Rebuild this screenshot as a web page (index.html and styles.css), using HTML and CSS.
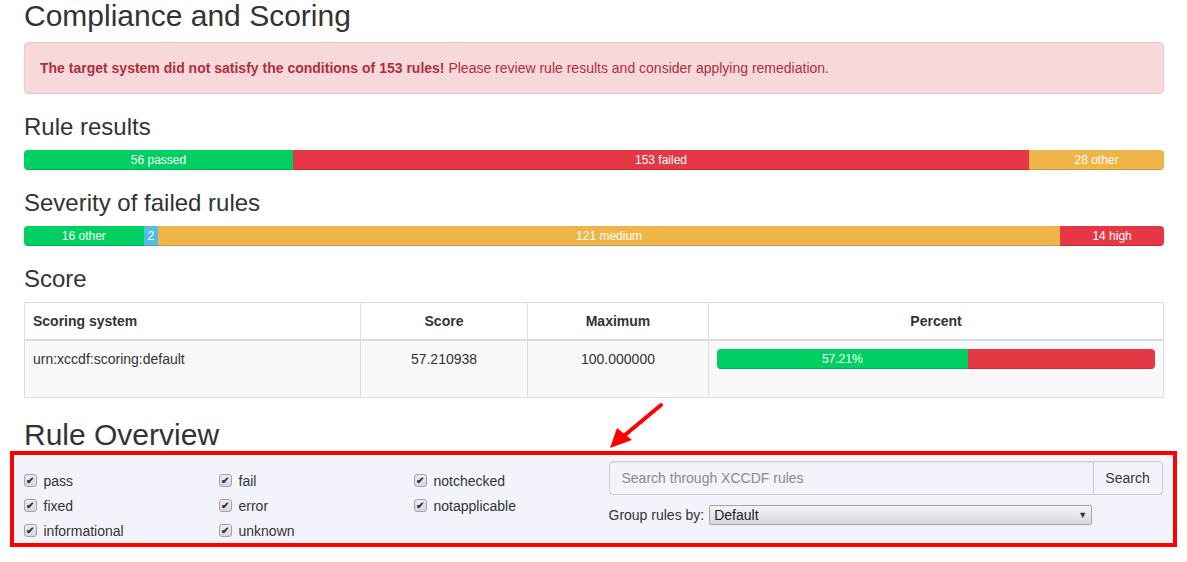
FILE: index.html
```html
<!DOCTYPE html>
<html>
<head>
<meta charset="utf-8">
<link rel="stylesheet" href="styles.css">
</head>
<body>
<div class="container">
  <h2 class="first">Compliance and Scoring</h2>
  <div class="alert"><strong>The target system did not satisfy the conditions of 153 rules!</strong> Please review rule results and consider applying remediation.</div>

  <h3>Rule results</h3>
  <div class="progress">
    <div class="bar green" style="width:23.6%">56 passed</div>
    <div class="bar red" style="width:64.56%">153 failed</div>
    <div class="bar orange" style="flex:1">28 other</div>
  </div>

  <h3>Severity of failed rules</h3>
  <div class="progress">
    <div class="bar green" style="width:10.5%">16 other</div>
    <div class="bar blue" style="width:1.25%">2</div>
    <div class="bar orange" style="width:79.15%">121 medium</div>
    <div class="bar red" style="flex:1">14 high</div>
  </div>

  <h3>Score</h3>
  <table class="table">
    <thead>
      <tr>
        <th class="c1">Scoring system</th>
        <th class="c2 center">Score</th>
        <th class="c3 center">Maximum</th>
        <th class="c4 center">Percent</th>
      </tr>
    </thead>
    <tbody>
      <tr>
        <td>urn:xccdf:scoring:default</td>
        <td class="center">57.210938</td>
        <td class="center">100.000000</td>
        <td>
          <div class="progress pct">
            <div class="bar green" style="width:57.21%">57.21%</div>
            <div class="bar red" style="flex:1"></div>
          </div>
        </td>
      </tr>
    </tbody>
  </table>

  <h2 class="overview">Rule Overview</h2>
</div>

<div class="highlight">
  <div class="row">
    <div class="checks">
      <label class="chk"><span class="box">&#10004;</span>pass</label>
      <label class="chk"><span class="box">&#10004;</span>fail</label>
      <label class="chk"><span class="box">&#10004;</span>notchecked</label>
      <label class="chk"><span class="box">&#10004;</span>fixed</label>
      <label class="chk"><span class="box">&#10004;</span>error</label>
      <label class="chk"><span class="box">&#10004;</span>notapplicable</label>
      <label class="chk"><span class="box">&#10004;</span>informational</label>
      <label class="chk"><span class="box">&#10004;</span>unknown</label>
    </div>
    <div class="searchcol">
      <div class="input-group">
        <div class="input">Search through XCCDF rules</div>
        <div class="btn">Search</div>
      </div>
      <div class="group">
        <span>Group rules by:</span>
        <div class="select"><span>Default</span><span class="caret">&#9660;</span></div>
      </div>
    </div>
  </div>
</div>

<svg class="arrow" width="70" height="60" viewBox="0 0 70 60">
  <line x1="60" y1="9" x2="24" y2="39" stroke="#ff0000" stroke-width="4" stroke-linecap="round"/>
  <polygon points="9,52 16,32 31,44" fill="#ff0000"/>
</svg>
</body>
</html>
```

FILE: styles.css
```css
* { box-sizing: border-box; }
html, body { margin: 0; padding: 0; background: #fff; }
body {
  font-family: "Liberation Sans", Arial, sans-serif;
  font-size: 14px;
  line-height: 20px;
  color: #333;
  position: relative;
  width: 1187px;
  height: 562px;
  overflow: hidden;
}
.container {
  width: 1170px;
  margin: 0 auto;
  padding: 0 15px;
  position: relative;
  left: 0.5px;
}
h2, h3 {
  font-weight: 400;
  margin: 20px 0 10px;
  color: #333;
}
h2 { font-size: 30px; line-height: 33px; }
h3 { font-size: 24px; line-height: 26px; }
h2.first { margin-top: -1px; }
h2.overview { margin-bottom: 0; }

.alert {
  background: #f7d8db;
  border: 1px solid #f0c4c9;
  color: #b02f3b;
  border-radius: 4px;
  padding: 15px;
  margin-bottom: 20px;
}
.alert strong { font-weight: 700; }

.progress {
  display: flex;
  height: 20px;
  border-radius: 4px;
  overflow: hidden;
  margin-bottom: 20px;
  background: #f5f5f5;
}
.bar {
  height: 20px;
  font-size: 12px;
  line-height: 20px;
  color: #fff;
  text-align: center;
  white-space: nowrap;
  overflow: hidden;
  box-shadow: inset 0 -1px 0 rgba(0,0,0,.15);
}
.green { background: #00d062; }
.red { background: #e63744; }
.orange { background: #f0b548; }
.blue { background: #55bde0; }

.table {
  width: 100%;
  border-collapse: collapse;
  margin-bottom: 20px;
  border: 1px solid #ddd;
}
.table th, .table td {
  border: 1px solid #ddd;
  padding: 8px;
  vertical-align: top;
  text-align: left;
}
.table th { font-weight: 700; border-bottom: 2px solid #ddd; }
.table tbody tr { background: #f9f9f9; }
.table .center { text-align: center; }
.c1 { width: 336px; }
.c2 { width: 167px; }
.c3 { width: 181px; }
.c4 { width: 455px; }
.progress.pct { margin-bottom: 20px; }

.highlight {
  margin: 0 10px;
  border: 4px solid #ff0000;
  background: #f3f3fc;
  height: 96px;
}
.row {
  display: flex;
  padding: 6px 10px 0 10px;
}
.checks {
  width: 585px;
  display: grid;
  grid-template-columns: 195px 195px 195px;
  grid-auto-rows: 25px;
  padding-top: 7px;
  margin-left: -0.5px;
}
.chk {
  display: flex;
  align-items: center;
  height: 25px;
  color: #333;
  font-size: 14px;
}
.box {
  width: 13px;
  height: 13px;
  border: 1px solid #a2a2ad;
  border-radius: 3px;
  background: linear-gradient(#ececf1, #d6d6dd);
  color: #333;
  font-size: 10px;
  font-weight: 700;
  line-height: 11px;
  text-align: center;
  margin-right: 7px;
}
.searchcol {
  width: 554px;
}
.input-group {
  display: flex;
  height: 34px;
}
.input {
  flex: 1;
  border: 1px solid #ccc;
  border-radius: 4px 0 0 4px;
  padding: 6px 12px;
  color: #8a8a8a;
  line-height: 20px;
  box-shadow: inset 0 1px 1px rgba(0,0,0,.075);
}
.btn {
  width: 69px;
  border: 1px solid #ccc;
  border-left: none;
  border-radius: 0 4px 4px 0;
  padding: 6px 8px;
  line-height: 20px;
  color: #333;
  text-align: center;
}
.group {
  display: flex;
  align-items: center;
  margin-top: 10px;
  color: #333;
}
.select {
  margin-left: 5px;
  width: 383px;
  height: 20px;
  border: 1px solid #a4a4a8;
  border-radius: 2px;
  background: linear-gradient(#f4f4f7, #d9d9de);
  display: flex;
  justify-content: space-between;
  align-items: center;
  padding: 0 4px 0 4px;
  color: #222;
}
.caret { font-size: 9px; color: #333; }

.arrow {
  position: absolute;
  left: 601px;
  top: 396px;
}
```
